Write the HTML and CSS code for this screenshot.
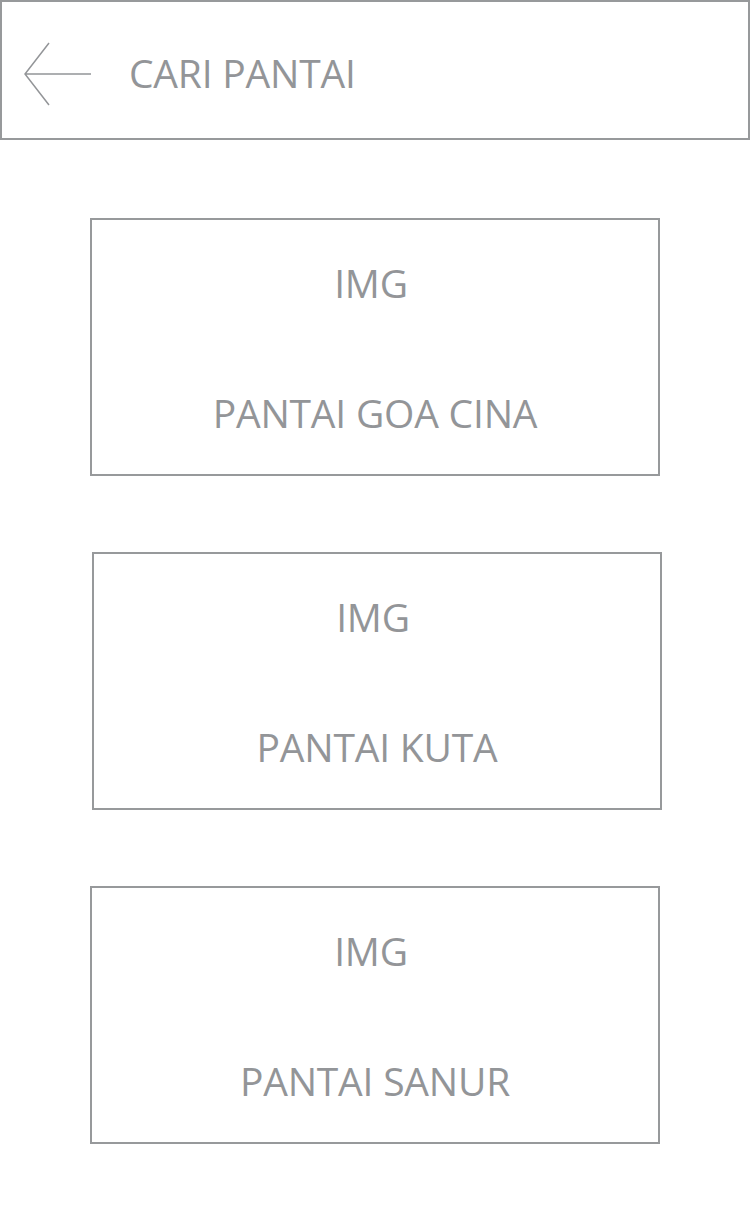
FILE: index.html
```html
<!DOCTYPE html>
<html lang="id">
<head>
<meta charset="utf-8">
<title>Cari Pantai</title>
<link rel="stylesheet" href="styles.css">
</head>
<body>
<header class="topbar">
  <svg class="back" width="68" height="64" viewBox="0 0 68 64" aria-hidden="true">
    <path d="M25 1 L1 32 L25 63 M1 32 H67" fill="none" stroke="#939598" stroke-width="1.5"/>
  </svg>
  <h1 class="title">CARI PANTAI</h1>
</header>
<main class="list">
  <section class="card">
    <div class="img">IMG</div>
    <div class="name">PANTAI GOA CINA</div>
  </section>
  <section class="card card--shift">
    <div class="img">IMG</div>
    <div class="name">PANTAI KUTA</div>
  </section>
  <section class="card">
    <div class="img">IMG</div>
    <div class="name">PANTAI SANUR</div>
  </section>
</main>
</body>
</html>
```
FILE: styles.css
```css
* { box-sizing: border-box; }
html, body { margin: 0; padding: 0; background: #fff; }
body {
  width: 750px;
  font-family: "Open Sans", "Noto Sans", sans-serif;
  color: #939598;
}
.topbar {
  height: 140px;
  border: 2px solid #97999b;
  display: flex;
  align-items: center;
  gap: 37px;
  padding: 5px 0 0 22px;
}
.back { display: block; margin-top: 3px; flex: none; }
.title {
  margin: 0;
  font-size: 39px;
  font-weight: 400;
  line-height: normal;
  letter-spacing: -0.2px;
}
.list {
  display: flex;
  flex-direction: column;
  gap: 76px;
  padding: 78px 0 0 90px;
}
.card {
  width: 570px;
  height: 258px;
  border: 2px solid #97999b;
  display: flex;
  flex-direction: column;
  align-items: center;
  gap: 77px;
  padding-top: 36px;
  font-size: 39px;
  line-height: normal;
  letter-spacing: -0.2px;
}
.card--shift { margin-left: 2px; }
.img { padding-right: 8px; }
```
